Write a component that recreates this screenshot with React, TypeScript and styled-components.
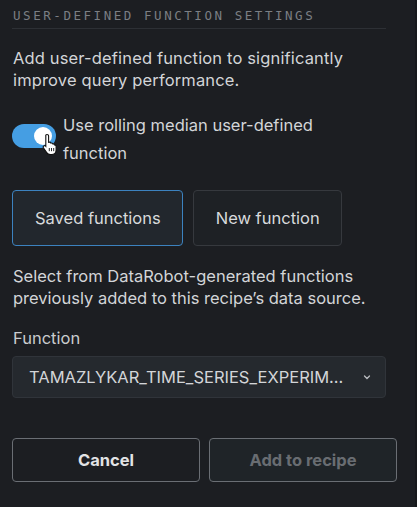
import React, { useState } from 'react';
import styled, { createGlobalStyle } from 'styled-components';

const GlobalStyle = createGlobalStyle`
  html, body {
    margin: 0;
    padding: 0;
    background: #1c1e22;
  }
  body {
    font-family: Inter, "Noto Sans", sans-serif;
    -webkit-font-smoothing: antialiased;
  }
`;

const App: React.FC = () => {
    const [enabled, setEnabled] = useState<boolean>(true);
    const [mode, setMode] = useState<'saved' | 'new'>('saved');

    return (
        <>
            <GlobalStyle />
            <Panel>
                <Heading>User-defined function settings</Heading>
                <Intro>
                    Add user-defined function to significantly improve query performance.
                </Intro>
                <ToggleRow>
                    <SwitchWrap>
                        <Switch $on={enabled} onClick={() => setEnabled(!enabled)}>
                            <Knob $on={enabled} />
                        </Switch>
                        <Pointer viewBox="0 0 16 22" width="16" height="22">
                            <path
                                d="M5 1.5c1 0 1.6.7 1.6 1.6v6.2l.4-.1c.9-.2 1.6.2 1.8.9.8-.3 1.6 0 1.9.8.8-.2 1.6.2 1.8 1 .9-.1 1.6.5 1.6 1.4v3.6c0 2.6-2 4.6-4.6 4.6H8.3c-1.5 0-2.8-.7-3.6-1.9L1.4 14.9c-.5-.7-.3-1.6.4-2 .6-.4 1.4-.3 1.9.3l.1.1V3.1C3.6 2.2 4.2 1.5 5 1.5z"
                                fill="#ffffff"
                                stroke="#111"
                                strokeWidth="1.1"
                            />
                            <path d="M7.3 15v3.2M9.5 15v3.2M11.7 15v3.2" stroke="#111" strokeWidth="0.9" />
                        </Pointer>
                    </SwitchWrap>
                    <ToggleLabel>Use rolling median user-defined function</ToggleLabel>
                </ToggleRow>
                <Segments>
                    <Segment $active={mode === 'saved'} onClick={() => setMode('saved')}>
                        Saved functions
                    </Segment>
                    <Segment $active={mode === 'new'} onClick={() => setMode('new')}>
                        New function
                    </Segment>
                </Segments>
                <Hint>
                    Select from DataRobot-generated functions previously added to this recipe’s data source.
                </Hint>
                <FieldLabel>Function</FieldLabel>
                <Select>
                    <SelectValue>TAMAZLYKAR_TIME_SERIES_EXPERIM...</SelectValue>
                    <svg width="10" height="10" viewBox="0 0 10 10">
                        <path d="M2.5 4l2.5 2.5L7.5 4" fill="none" stroke="#b8bbbf" strokeWidth="1.3" strokeLinecap="round" />
                    </svg>
                </Select>
                <Footer>
                    <ActionBtn>Cancel</ActionBtn>
                    <ActionBtn disabled>Add to recipe</ActionBtn>
                </Footer>
            </Panel>
        </>
    );
};

export default App;

const Panel = styled.div`
width: 417px;
height: 507px;
box-sizing: border-box;
padding: 6px 29px 0 12px;
display: flex;
flex-direction: column;
border-right: 2px solid #16181b;
`

const Heading = styled.div`
font-family: "DejaVu Sans Mono", "Liberation Mono", monospace;
font-size: 12.5px;
letter-spacing: 2.55px;
text-transform: uppercase;
color: #7b7f84;
padding: 2px 0 0 1px;
height: 20px;
border-bottom: 1px solid #2d3035;
`

const Intro = styled.p`
margin: 18px 0 0 1px;
font-size: 16.5px;
letter-spacing: 0.15px;
line-height: 22px;
color: #d3d5d8;
width: 350px;
`

const ToggleRow = styled.div`
display: flex;
align-items: flex-start;
margin-top: 20px;
`

const SwitchWrap = styled.div`
position: relative;
padding-top: 13px;
`

const Switch = styled.button<{ $on: boolean }>`
width: 44px;
height: 24px;
border-radius: 12px;
border: none;
padding: 0;
cursor: pointer;
display: flex;
align-items: center;
background: ${p => (p.$on ? '#459ee3' : '#4a4e54')};
`

const Knob = styled.span<{ $on: boolean }>`
width: 18px;
height: 18px;
border-radius: 50%;
background: #ffffff;
margin-left: ${p => (p.$on ? '22px' : '3px')};
`

const Pointer = styled.svg`
position: absolute;
left: 30px;
top: 22px;
`

const ToggleLabel = styled.span`
margin-left: 7px;
width: 290px;
font-size: 16.5px;
line-height: 28px;
color: #d3d5d8;
`

const Segments = styled.div`
display: flex;
gap: 10px;
margin-top: 23px;
`

const Segment = styled.button<{ $active: boolean }>`
height: 56px;
padding: 0 21px 0 22px;
border-radius: 4px;
font-family: Inter, sans-serif;
font-size: 16.5px;
color: #d8dadc;
cursor: pointer;
background: ${p => (p.$active ? '#22272d' : '#1e2125')};
border: 1px solid ${p => (p.$active ? '#3c82bf' : '#36393e')};
`

const Hint = styled.p`
margin: 19px 0 0 1px;
font-size: 16.5px;
line-height: 22px;
color: #d3d5d8;
`

const FieldLabel = styled.div`
margin: 18px 0 0 1px;
font-size: 16.5px;
line-height: 22px;
color: #c9cbce;
`

const Select = styled.div`
margin-top: 7px;
height: 42px;
width: 374px;
box-sizing: border-box;
display: flex;
align-items: center;
justify-content: space-between;
padding: 0 13px 0 16px;
background: #25292e;
border: 1px solid #30343a;
border-radius: 4px;
`

const SelectValue = styled.span`
white-space: nowrap;
font-size: 16.5px;
color: #d3d5d8;
`

const Footer = styled.div`
display: grid;
grid-template-columns: 1fr 1fr;
gap: 9px;
margin-top: 40px;
margin-right: -11px;
`

const ActionBtn = styled.button`
height: 44px;
border-radius: 4px;
font-family: Inter, sans-serif;
font-size: 16.5px;
font-weight: 700;
border: 1px solid #6a6e74;
background: #1c1e22;
color: #e2e3e5;
cursor: pointer;
&:disabled {
    background: #1f2428;
    color: #696d72;
    cursor: default;
}
`
